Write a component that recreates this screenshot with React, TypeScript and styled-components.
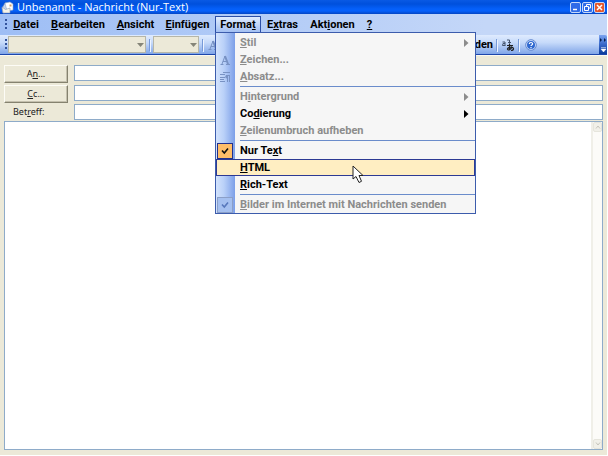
import React from 'react';
import styled, { createGlobalStyle, css } from 'styled-components';

const GlobalStyle = createGlobalStyle`
  * { box-sizing: border-box; }
  html, body, #root { height: 100%; margin: 0; }
  body { background: #fff; overflow: hidden; }
  body, button, input, select, textarea { font-family: Roboto, "Liberation Sans", sans-serif; }
`;

const Window = styled.div`
  display: flex;
  flex-direction: column;
  height: calc(100% - 1px);
  margin-right: 1px;
  background: #ece9d8;
`;

const TitleBar = styled.header`
  display: flex;
  align-items: center;
  flex: none;
  height: 14px;
  padding: 0 2px 0 1px;
  gap: 3px;
  color: #fff;
  background: linear-gradient(#0a5ae4 0, #0050dc 4px, #0560fa 9px, #0560fa 11px, #0345c4 14px);
`;

const Title = styled.h1`
  flex: 1;
  margin: 0;
  font-family: "Open Sans", sans-serif;
  font-size: 11px;
  font-weight: 500;
  line-height: 14px;
  white-space: nowrap;
`;

const CaptionButton = styled.button<{ $close?: boolean }>`
  display: flex;
  width: 11px;
  height: 11px;
  padding: 0;
  border: 1px solid #c5d8fa;
  border-radius: 2px;
  background: ${p => (p.$close ? '#e4572c' : '#2f6be8')};
  svg { display: block; width: 9px; height: 9px; }
`;

const CaptionButtons = styled.div`
  display: flex;
  gap: 1px;
`;

const Bars = styled.div`
  flex: none;
  background: linear-gradient(90deg, #9ebef5, #c4d7f8 80%);
  border-bottom: 1px solid #fbf9ef;
`;

const MenuBar = styled.nav`
  display: flex;
  align-items: stretch;
  height: 21px;
  padding: 2px 0 2px 5px;
`;

const Grip = styled.span`
  flex: none;
  align-self: center;
  width: 2px;
  height: 12px;
  background: repeating-linear-gradient(#33539c 0 2px, transparent 2px 4px);
`;

const MenuSlot = styled.div<{ $w: number }>`
  position: relative;
  flex: none;
  width: ${p => p.$w}px;
`;

const MenuButton = styled.button<{ $open?: boolean }>`
  display: block;
  width: 100%;
  height: 17px;
  padding: 0;
  border: 1px solid transparent;
  border-bottom: 0;
  background: none;
  color: #000;
  font-size: 11px;
  font-weight: 700;
  line-height: 14px;
  white-space: nowrap;
  ${p => p.$open && css`
    border-color: #2c4fa8;
    background: linear-gradient(#e0ecfe, #9fbdf2);
  `}
`;

const Popup = styled.div`
  position: absolute;
  z-index: 2;
  top: 16px;
  left: 0;
  width: 261px;
  padding-top: 1px;
  border: 1px solid #3c5cac;
  background: linear-gradient(90deg, #d3e3fd 0, #b9d0f8 8px, #7c9fe8 19px, #f6f6f6 19px);
`;

const Item = styled.button<{ $hot?: boolean }>`
  display: flex;
  align-items: center;
  width: 100%;
  height: 17px;
  padding: 0 6px 0 1px;
  border: 0;
  background: none;
  color: #000;
  font-size: 11px;
  font-weight: 700;
  line-height: 14px;
  text-align: left;
  white-space: nowrap;
  &:disabled { color: #8c8c8c; }
  ${p => p.$hot && css`
    outline: 1px solid #2d3a94;
    outline-offset: -1px;
    background: #ffeec2;
  `}
`;

const ItemIcon = styled.span`
  display: flex;
  flex: none;
  width: 23px;
  svg { display: block; }
`;

const CheckBox = styled.span<{ $off?: boolean }>`
  width: 16px;
  height: 16px;
  border: 1px solid ${p => (p.$off ? '#8b9fc8' : '#22308c')};
  background: ${p => (p.$off ? '#a5c0f0' : '#ffbe69')};
`;

const ItemLabel = styled.span`
  flex: 1;
`;

const Separator = styled.hr`
  height: 1px;
  margin: 1px 0 1px 24px;
  border: 0;
  background: #6a8ccb;
`;

const Cursor = styled.svg`
  position: absolute;
  z-index: 3;
  left: 136px;
  top: 132px;
  width: 13px;
  height: 19px;
  pointer-events: none;
`;

const ToolRow = styled.div`
  display: flex;
  height: 20px;
  border-bottom: 1px solid #1c46ac;
`;

const Tools = styled.div`
  display: flex;
  flex: 1;
  min-width: 0;
  align-items: center;
  padding-left: 5px;
  overflow: hidden;
  background: linear-gradient(#dfebfe, #c6dafa 40%, #80a5e8);
`;

const Combo = styled.label<{ $w: number }>`
  position: relative;
  flex: none;
  width: ${p => p.$w}px;
  height: 17px;
  margin-left: 1px;
  svg { position: absolute; right: 2px; top: 7px; }
`;

const ComboSelect = styled.select`
  display: block;
  width: 100%;
  height: 100%;
  border: 1px solid #b6b6a8;
  border-radius: 0;
  background: #ece9d8;
  appearance: none;
  opacity: 1;
`;

const Divider = styled.span`
  flex: none;
  width: 1px;
  height: 12px;
  margin: 0 2px 0 3px;
  background: #779ad8;
  box-shadow: 1px 1px 0 #eef4ff;
`;

const ToolButton = styled.button<{ $w: number }>`
  display: flex;
  flex: none;
  align-items: center;
  justify-content: flex-end;
  width: ${p => p.$w}px;
  height: 18px;
  padding: 0;
  border: 0;
  background: none;
  color: #000;
  font-size: 11px;
  font-weight: 700;
  svg { display: block; }
`;

const Overflow = styled.button`
  flex: none;
  width: 8px;
  padding: 0;
  border: 0;
  border-radius: 0 2px 0 0;
  background: linear-gradient(#7ba3ef, #3868c8 50%, #0b3b9c);
  svg { display: block; }
`;

const Form = styled.form`
  display: flex;
  flex: 1;
  flex-direction: column;
  min-height: 0;
  padding: 9px 4px 5px;
`;

const Field = styled.div`
  display: grid;
  grid-template-columns: 64px 1fr;
  column-gap: 6px;
  height: 18px;
  margin-bottom: 2px;
  &:nth-child(3) { height: 16px; margin: -1px 0 1px; }
`;

const AddressButton = styled.button`
  height: 18px;
  padding: 0;
  border: 1px solid;
  border-color: #fdfcf6 #85826f #85826f #fdfcf6;
  box-shadow: inset -1px -1px #c4c0ae;
  background: #ece9d8;
  color: #222;
  font-family: "Noto Sans", sans-serif;
  font-size: 9px;
  line-height: 12px;
`;

const FieldLabel = styled.label`
  padding-left: 9px;
  color: #222;
  font-family: "Noto Sans", sans-serif;
  font-size: 9px;
  line-height: 15px;
`;

const TextInput = styled.input`
  width: 100%;
  height: 16px;
  padding: 0 3px;
  border: 1px solid #8eabc9;
  border-radius: 0;
  background: #fff;
  font-size: 11px;
`;

const Editor = styled.div`
  display: flex;
  flex: 1;
  min-height: 0;
  border: 1px solid #8eabc9;
  background: #fff;
`;

const Body = styled.textarea`
  flex: 1;
  min-width: 0;
  padding: 3px;
  border: 0;
  outline: 0;
  background: transparent;
  resize: none;
  font-size: 11px;
`;

const ScrollTrack = styled.div`
  display: flex;
  flex-direction: column;
  justify-content: space-between;
  width: 11px;
  border-left: 2px solid #f0efe8;
  background: #fcfbf8;
`;

const ScrollButton = styled.button`
  height: 10px;
  padding: 0;
  border: 1px solid #e6e5dc;
  border-radius: 2px;
  background: #f1f0e9;
  svg { display: block; margin: auto; }
`;

/* Label with its access key underlined */
function Key({ text, at }: { text: string; at: number }) {
  return <span>{text.slice(0, at)}<u>{text[at]}</u>{text.slice(at + 1)}</span>;
}

function Arrow({ color }: { color: string }) {
  return <svg width="5" height="8" viewBox="0 0 5 8"><path d="M0 0L4.500 4L0 8Z" fill={color} /></svg>;
}

function Check({ color }: { color: string }) {
  return <svg width="14" height="14" viewBox="0 0 14 14"><path d="M4 6.500L6.300 9L10 4.500" fill="none" stroke={color} strokeWidth="1.600" /></svg>;
}

function MessageIcon() {
  return (
    <svg width="13" height="13" viewBox="0 0 13 13" aria-hidden="true">
      <path d="M1 7L4 2L8 3L8 11L2 12Z" fill="#c3d4ef" stroke="#6b86b8" strokeWidth=".7" />
      <path d="M4 2L9 1L12 3L12 9L6 10Z" fill="#fff" stroke="#8fa4c8" strokeWidth=".6" />
      <path d="M1 6L4.500 8.500L9 7V12L2 12Z" fill="#f5f3e8" stroke="#8c98b4" strokeWidth=".6" />
      <path d="M8.500 3.500h2v2h-2Z" fill="#d9a066" />
    </svg>
  );
}

function ParagraphIcon() {
  return (
    <svg width="16" height="14" viewBox="0 0 16 14">
      <path d="M6 2.500H13M3 4.500H8M3 7.500H8M3 9.500H7M3 11.500H8M9 5.500H13M10.500 5V12M12.500 5V12" stroke="#7892c4" fill="none" />
      <path d="M10 5a1.700 1.700 0 0 0 0 3.500Z" fill="#7892c4" />
    </svg>
  );
}

function FontIcon() {
  return (
    <svg width="16" height="14" viewBox="0 0 16 14">
      <path d="M3.500 11.500H6.500M9 11.500H13M5 11L8 3L11 11M6 8.500H10" fill="none" stroke="#7892c4" />
      <path d="M8 3L11 11" stroke="#7892c4" strokeWidth="2" />
    </svg>
  );
}

function FormatMenu() {
  return (
    <Popup role="menu">
      <Item disabled><ItemIcon /><ItemLabel><Key text="Stil" at={0} /></ItemLabel><Arrow color="#8c8c8c" /></Item>
      <Item disabled><ItemIcon><FontIcon /></ItemIcon><ItemLabel><Key text="Zeichen..." at={0} /></ItemLabel></Item>
      <Item disabled><ItemIcon><ParagraphIcon /></ItemIcon><ItemLabel><Key text="Absatz..." at={0} /></ItemLabel></Item>
      <Separator />
      <Item disabled><ItemIcon /><ItemLabel><Key text="Hintergrund" at={1} /></ItemLabel><Arrow color="#8c8c8c" /></Item>
      <Item><ItemIcon /><ItemLabel><Key text="Codierung" at={2} /></ItemLabel><Arrow color="#000" /></Item>
      <Item disabled><ItemIcon /><ItemLabel><Key text="Zeilenumbruch aufheben" at={0} /></ItemLabel></Item>
      <Separator />
      <Item><ItemIcon><CheckBox><Check color="#111" /></CheckBox></ItemIcon><ItemLabel><Key text="Nur Text" at={6} /></ItemLabel></Item>
      <Item $hot><ItemIcon /><ItemLabel><Key text="HTML" at={0} /></ItemLabel></Item>
      <Item><ItemIcon /><ItemLabel><Key text="Rich-Text" at={0} /></ItemLabel></Item>
      <Separator />
      <Item disabled><ItemIcon><CheckBox $off><Check color="#5878bc" /></CheckBox></ItemIcon><ItemLabel><Key text="Bilder im Internet mit Nachrichten senden" at={0} /></ItemLabel></Item>
      <Cursor viewBox="0 0 13 19">
        <path d="M1 1V14L4 11.500L7 17.500L9.500 16.300L7 10.500H11Z" fill="#fff" stroke="#222" strokeWidth="1" />
      </Cursor>
    </Popup>
  );
}

const menus = [
  { text: 'Datei', at: 0, w: 38 },
  { text: 'Bearbeiten', at: 0, w: 66 },
  { text: 'Ansicht', at: 0, w: 49 },
  { text: 'Einfügen', at: 0, w: 55 },
  { text: 'Format', at: 5, w: 46 },
  { text: 'Extras', at: 1, w: 43 },
  { text: 'Aktionen', at: 3, w: 57 },
  { text: '?', at: 0, w: 17 },
];

export default function App() {
  return (
    <Window>
      <GlobalStyle />
      <TitleBar>
        <MessageIcon />
        <Title>Unbenannt - Nachricht (Nur-Text)</Title>
        <CaptionButtons>
          <CaptionButton aria-label="Minimieren"><svg viewBox="0 0 9 9"><path d="M2 6.500H6" stroke="#fff" strokeWidth="1.500" /></svg></CaptionButton>
          <CaptionButton aria-label="Verkleinern"><svg viewBox="0 0 9 9"><path d="M3.500 3V1.500H7.500V5H6M1.500 3.500H5.500V7.500H1.500Z" fill="none" stroke="#fff" /></svg></CaptionButton>
          <CaptionButton $close aria-label="Schließen"><svg viewBox="0 0 9 9"><path d="M2 2L7 7M7 2L2 7" stroke="#fff" strokeWidth="1.500" /></svg></CaptionButton>
        </CaptionButtons>
      </TitleBar>
      <Bars>
        <MenuBar>
          <Grip />
          {menus.map(m => (
            <MenuSlot key={m.text} $w={m.w}>
              <MenuButton $open={m.text === 'Format'}><Key text={m.text} at={m.at} /></MenuButton>
              {m.text === 'Format' && <FormatMenu />}
            </MenuSlot>
          ))}
        </MenuBar>
        <ToolRow>
          <Tools>
            <Grip />
            <Combo $w={138}>
              <ComboSelect disabled aria-label="Schriftart" />
              <svg width="7" height="4" viewBox="0 0 7 4"><path d="M0 0H7L3.500 4Z" fill="#858578" /></svg>
            </Combo>
            <Divider />
            <Combo $w={46}>
              <ComboSelect disabled aria-label="Schriftgrad" />
              <svg width="7" height="4" viewBox="0 0 7 4"><path d="M0 0H7L3.500 4Z" fill="#858578" /></svg>
            </Combo>
            <Divider />
            <ToolButton $w={16} disabled aria-label="Schriftfarbe"><FontIcon /></ToolButton>
            <ToolButton $w={272}>Senden</ToolButton>
            <Divider />
            <ToolButton $w={16} aria-label="Übersetzen">
              <svg width="14" height="14" viewBox="0 0 14 14">
                <path d="M1.500 4H4V7.500M4 5.500H2L1.500 7.500H4.500M6 2H8.500V5M7 4L8.500 5.500L10 4" fill="none" stroke="#45546e" />
                <path d="M6 7.500H12M8.500 6V12M11 8.500C10 12 7 13 6.500 11C6.500 9 12 8.500 12.500 10.500C12.500 12 11 12.500 10 12.500" fill="none" stroke="#222" strokeWidth="1.200" />
              </svg>
            </ToolButton>
            <Divider />
            <ToolButton $w={16} aria-label="Hilfe">
              <svg width="12" height="12" viewBox="0 0 12 12">
                <circle cx="6" cy="6" r="5.300" fill="#d5e5fc" stroke="#6388d0" />
                <circle cx="6" cy="6" r="4" fill="#2e68d0" />
                <path d="M4.300 5C4.300 3 7.700 3 7.600 5C7.500 6 6 6 6 7M6 8V9.200" fill="none" stroke="#fff" strokeWidth="1.200" />
              </svg>
            </ToolButton>
          </Tools>
          <Overflow aria-label="Weitere Schaltflächen">
            <svg width="8" height="19" viewBox="0 0 8 19">
              <path d="M1 3L3 5L1 7ZM5 3L7 5L5 7Z" fill="#07204f" />
              <path d="M2 12.500H7M2 14H7L4.500 17Z" fill="#fff" stroke="#fff" strokeWidth=".5" />
            </svg>
          </Overflow>
        </ToolRow>
      </Bars>
      <Form onSubmit={e => e.preventDefault()}>
        <Field>
          <AddressButton type="button"><Key text="An..." at={1} /></AddressButton>
          <TextInput aria-label="An" />
        </Field>
        <Field>
          <AddressButton type="button"><Key text="Cc..." at={0} /></AddressButton>
          <TextInput aria-label="Cc" />
        </Field>
        <Field>
          <FieldLabel htmlFor="subject"><Key text="Betreff:" at={3} /></FieldLabel>
          <TextInput id="subject" />
        </Field>
        <Editor>
          <Body aria-label="Nachrichtentext" />
          <ScrollTrack>
            <ScrollButton type="button" aria-label="Nach oben"><svg width="6" height="4" viewBox="0 0 6 4"><path d="M1 3.500L3 1L5 3.500" fill="none" stroke="#c5c4bb" /></svg></ScrollButton>
            <ScrollButton type="button" aria-label="Nach unten"><svg width="6" height="4" viewBox="0 0 6 4"><path d="M1 .5L3 3L5 .5" fill="none" stroke="#c5c4bb" /></svg></ScrollButton>
          </ScrollTrack>
        </Editor>
      </Form>
    </Window>
  );
}
